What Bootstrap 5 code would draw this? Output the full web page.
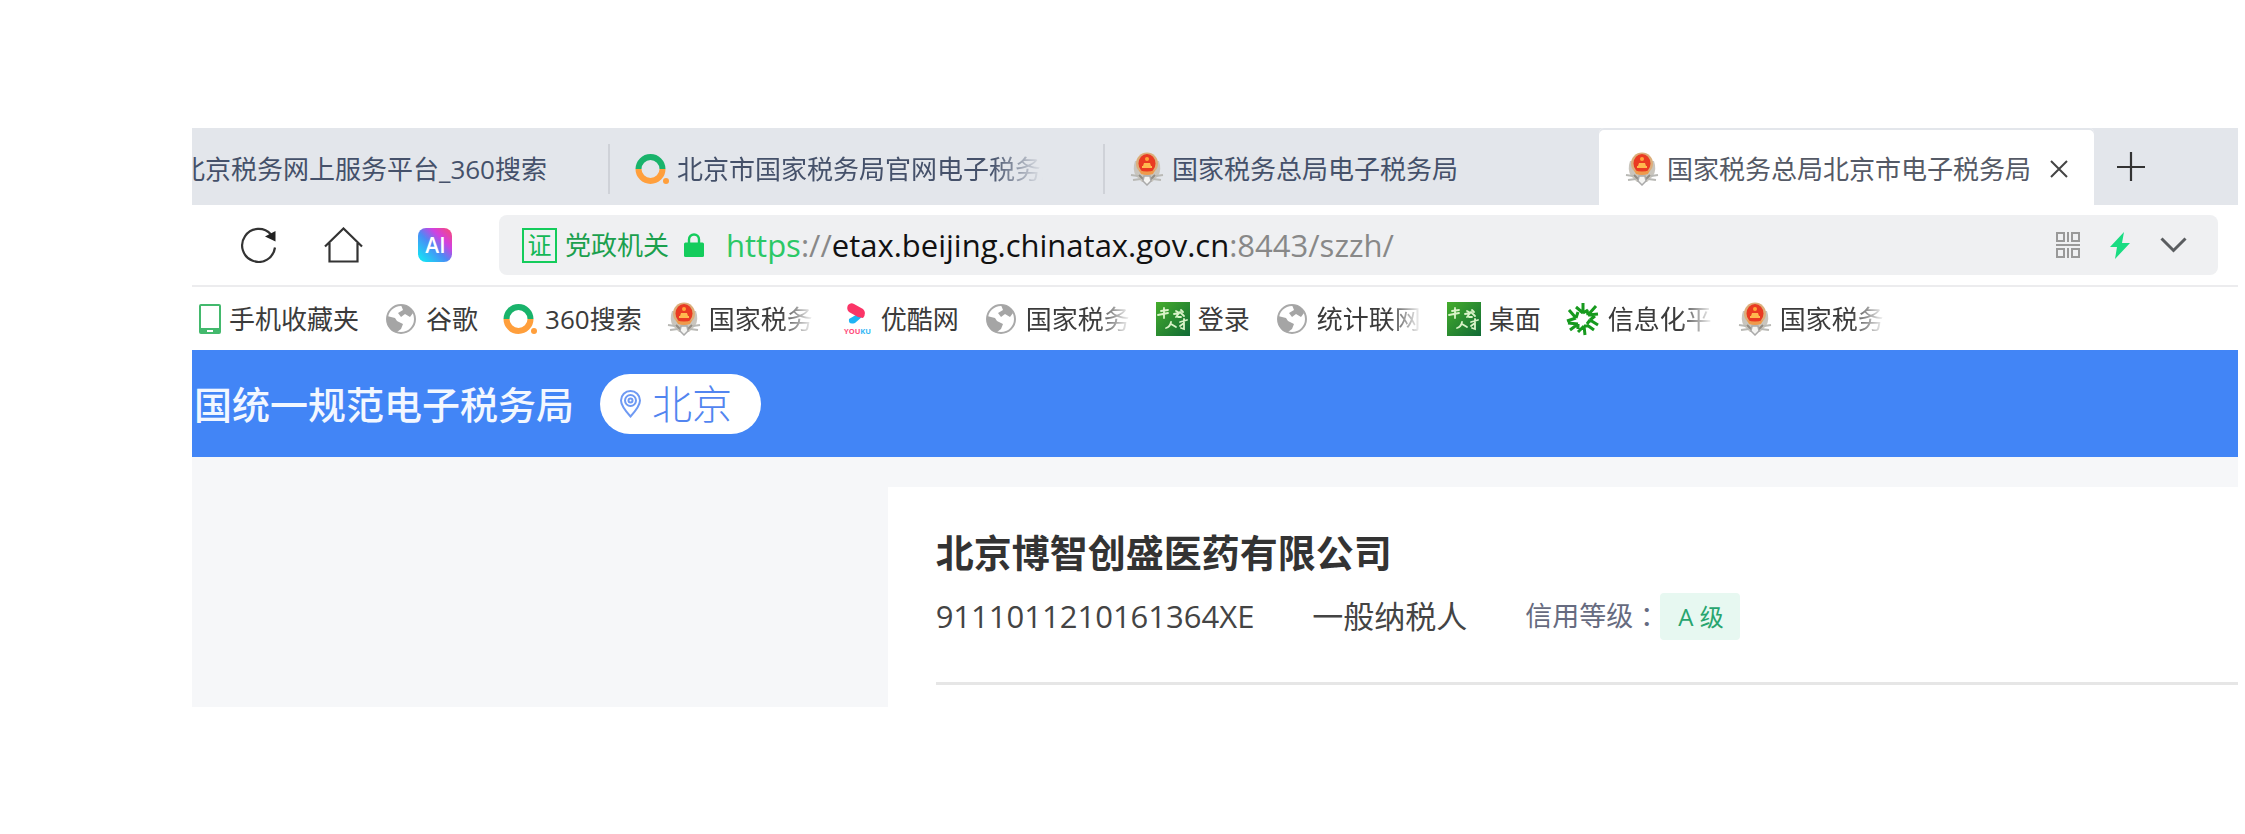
<!DOCTYPE html>
<html lang="zh-CN">
<head>
<meta charset="utf-8">
<meta name="viewport" content="width=device-width, initial-scale=1">
<title>国家税务总局北京市电子税务局</title>
<link href="https://cdn.jsdelivr.net/npm/bootstrap@5.3.0/dist/css/bootstrap.min.css" rel="stylesheet">
<style>
  body { font-family: "Open Sans", "Noto Sans CJK SC", sans-serif; color: #333; background: #fff; }
  .browser { margin: 128px 7px 0 192px; }
  .fs-ui { font-size: 26px; line-height: 36px; }
  a { text-decoration: none; color: inherit; }
  button { border: 0; padding: 0; background: none; color: inherit; }
  svg { display: block; flex: none; }
  .ico { width: 34px; height: 34px; }

  .tabstrip { height: 77px; background: #e3e6eb; color: #45516a; }
  .tab { flex: 0 1 495px; min-width: 0; padding: 4px 26px 0; gap: 8px; }
  .tab-first { flex-basis: 417px; padding-right: 62px; }
  .tab + .tab:not(.tab-on)::before { content: ""; width: 2px; height: 50px; margin-left: -27px; margin-right: 17px; background: #cfd2d8; }
  .tab-on { background: #fff; color: #555a66; border-radius: 5px 5px 0 0; box-shadow: inset 0 2px #e3e6eb; }
  .new-tab { margin-left: 22px; color: #333; }
  .fade-tab { width: 366px; -webkit-mask-image: linear-gradient(90deg, #000 86%, transparent); mask-image: linear-gradient(90deg, #000 86%, transparent); }

  .toolbar { height: 82px; padding-left: 48px; padding-right: 20px; border-bottom: 2px solid #ececee; }
  .tool-home { margin-left: 47px; }
  .tool-ai { margin-left: 55px; margin-right: 47px; }
  .omnibox { height: 60px; border-radius: 8px; background: #eff0f2; padding: 0 31px 0 23px; }
  .cert { width: 35px; height: 35px; border: 2px solid #14cc5c; line-height: 29px; font-size: 24px; color: #14b856; }
  .org { color: #1ba04e; margin: 0 15px 0 8px; }
  .url { font-size: 31px; line-height: 40px; margin-left: 22px; color: #888; outline: 0; }
  .url-scheme { color: #2bc866; }
  .url-host { color: #111; }

  .bookmarks { height: 63px; padding-left: 7px; gap: 25px; color: #3b3b3b; }
  .bookmarks a { gap: 8px; flex: none; }
  .fade-mark { width: 105px; -webkit-mask-image: linear-gradient(90deg, #000 68%, transparent); mask-image: linear-gradient(90deg, #000 68%, transparent); }

  .site-head { height: 107px; background: #4285f6; padding-left: 2px; gap: 26px; }
  .site-name { font-size: 38px; line-height: 56px; color: #f2f7ff; font-weight: 500; }
  .city { height: 60px; border-radius: 30px; background: #fff; color: #5285f0; font-size: 40px; line-height: 56px; font-weight: 300; padding: 0 29px 0 20px; gap: 11px; }

  .site-body { background: #f6f7f9; }
  .side { flex: 0 0 34%; }
  .company { background: #fff; margin-top: 30px; padding: 37px 0 22px 48px; }
  .company h1 { font-size: 38px; line-height: 56px; font-weight: 700; margin: 0 0 13px; }
  .facts { height: 47px; font-size: 31px; color: #444; gap: 58px; margin-bottom: 42px; }
  .credit { font-size: 27px; color: #666b80; }
  .colon { font-family: "Noto Sans CJK TC", sans-serif; }
  .grade { height: 47px; border-radius: 4px; background: #e7f8f1; color: #27a56f; font-size: 24px; padding: 0 16px 0 18px; }
  .rule { height: 3px; background: #e6e6e6; }
</style>
</head>
<body>
<svg width="0" height="0" class="position-absolute" aria-hidden="true">
  <defs>
    <linearGradient id="aiA" x1="0" y1="1" x2="1" y2="0"><stop offset=".1" stop-color="#19dcf5"/><stop offset=".45" stop-color="#4a8cf5"/><stop offset=".7" stop-color="#d23fe0"/><stop offset="1" stop-color="#fb4b6d"/></linearGradient>
    <linearGradient id="gr" x1="0" y1="0" x2="1" y2="1"><stop offset="0" stop-color="#45ad2c"/><stop offset="1" stop-color="#106a35"/></linearGradient>
    <symbol id="i-360" viewBox="0 0 34 34">
      <path d="M3.500 17A12 12 0 0 1 27.500 17" fill="none" stroke="#19b36b" stroke-width="6"/>
      <path d="M3.500 17A12 12 0 0 0 27.500 17" fill="none" stroke="#ff9f3c" stroke-width="6"/>
      <circle cx="31" cy="29" r="3" fill="#ff9f3c"/>
    </symbol>
    <symbol id="i-emblem" viewBox="0 0 34 34">
      <path d="M5 9q-3 9 1 15l6 6h10l6-6q4-6 1-15z" fill="#c9c5bd"/>
      <path d="M1 23l7 1M3 28l8-1M33 23l-7 1M31 28l-8-1" stroke="#b9b9b5" stroke-width="2"/>
      <path d="M9 23l5 5M25 23l-5 5" stroke="#918d86" stroke-width="2"/>
      <path d="M17 33l-4-4 1-5h6l1 5z" fill="#f4f4f2" stroke="#aaa" stroke-width="1.500"/>
      <ellipse cx="17" cy="11.500" rx="11" ry="11" fill="#dcae7a"/>
      <ellipse cx="17" cy="11.500" rx="8.500" ry="9.500" fill="#ea3a22"/>
      <path d="M12 14h10v2H12zM14 11h6l1 3h-8z" fill="#ffb84e"/><circle cx="17" cy="7" r="2" fill="#ffa53a"/>
      <path d="M9 18q8 3 16 0l-2 4q-6 2-12 0z" fill="#ee9a4c"/>
    </symbol>
    <symbol id="i-globe" viewBox="0 0 34 34">
      <circle cx="17" cy="17" r="14" fill="#fff" stroke="#a9a9a9" stroke-width="2"/>
      <path d="M17 3q9 0 12 8l-3 4-5-3-4 3-3-4 5-3z" fill="#a5a5a5"/>
      <path d="M3 14l8 2 2 3 6 3-2 5-4 3-5-1Q2 24 3 14z" fill="#a5a5a5"/>
    </symbol>
    <symbol id="i-green" viewBox="0 0 34 34">
      <path fill="url(#gr)" d="M0 0h34v34H0z"/>
      <g fill="none" stroke="#d9f3c8" stroke-width="1.800" stroke-linecap="round">
        <path d="M5 9l7-1M2 13l10-2M8 6v10M18 12l5-1M20 9l2 1M25 8l2 2M20 15l4-5 4 4M22 15h3"/>
        <path d="M15 20q-1 5-5 6M15 22l5 3M24 20l7-2M28 17v10l-3-1M28 21l-4 3"/>
      </g>
    </symbol>
  </defs>
</svg>

<main class="browser">
  <nav class="tabstrip d-flex fs-ui text-nowrap" aria-label="标签页">
    <a href="#" class="tab tab-first d-flex align-items-center justify-content-end overflow-hidden">北京税务网上服务平台_360搜索</a>
    <a href="#" class="tab d-flex align-items-center">
      <svg class="ico"><use href="#i-360"/></svg><span class="fade-tab overflow-hidden">北京市国家税务局官网电子税务局</span>
    </a>
    <a href="#" class="tab d-flex align-items-center">
      <svg class="ico"><use href="#i-emblem"/></svg><span>国家税务总局电子税务局</span>
    </a>
    <div class="tab tab-on d-flex align-items-center">
      <svg class="ico"><use href="#i-emblem"/></svg><a href="#">国家税务总局北京市电子税务局</a>
      <button type="button" class="ms-auto" aria-label="关闭标签页"><svg width="18" height="20" viewBox="0 0 18 20"><path d="M1 2l16 16M17 2L1 18" stroke="#444" stroke-width="2"/></svg></button>
    </div>
    <button type="button" class="new-tab" aria-label="新建标签页"><svg width="30" height="30" viewBox="0 0 30 30"><path d="M15 0v29M1 15h28" stroke="#333" stroke-width="2.200"/></svg></button>
  </nav>

  <div class="toolbar d-flex align-items-center fs-ui">
    <button type="button" aria-label="刷新"><svg width="37" height="36" viewBox="0 0 37 36"><path d="M35 20.500A16.500 16.500 0 1 1 31 7.500" fill="none" stroke="#333" stroke-width="2.200"/><path d="M35.500 4v10.500L25 9.500z" fill="#222"/></svg></button>
    <button type="button" class="tool-home" aria-label="主页"><svg width="39" height="36" viewBox="0 0 39 36"><path d="M1 19.500L19.500 1.500 38 19.500M5.500 16v18.500h28V16" fill="none" stroke="#333" stroke-width="2.200"/></svg></button>
    <button type="button" class="tool-ai" aria-label="AI 助手"><svg width="34" height="34" viewBox="0 0 34 34"><rect width="34" height="34" rx="8" fill="url(#aiA)"/><text x="17.500" y="25" text-anchor="middle" font-family="Open Sans" font-weight="600" font-size="21" fill="#fff">AI</text></svg></button>
    <div class="omnibox flex-grow-1 d-flex align-items-center text-nowrap">
      <span class="cert text-center">证</span><span class="org">党政机关</span>
      <svg width="20" height="24" viewBox="0 0 20 24"><path d="M5 11V6.500a5 5 0 0 1 10 0V11" fill="none" stroke="#14cc5c" stroke-width="2.400"/><rect y="9.500" width="20" height="14.500" rx="1.500" fill="#14cc5c"/></svg>
      <div class="url" role="textbox" aria-label="地址" contenteditable="true" spellcheck="false"><span class="url-scheme">https</span>://<span class="url-host">etax.beijing.chinatax.gov.cn</span>:8443/szzh/</div>
      <div class="ms-auto d-flex align-items-center">
        <button type="button" aria-label="二维码"><svg width="24" height="26" viewBox="0 0 24 26" fill="none" stroke="#999" stroke-width="2"><path d="M1 1h7v8H1zM16 1h7v8h-7zM1 17h7v8H1zM16 17h7v8h-7zM12 0v10M12 16v10M0 13h24"/></svg></button>
        <button type="button" class="px-4 mx-1" aria-label="极速模式"><svg width="24" height="27" viewBox="0 0 24 27"><path d="M16 0L2 15h7L7 27 22 11h-8z" fill="#19dc82"/></svg></button>
        <button type="button" aria-label="展开"><svg width="27" height="16" viewBox="0 0 27 16"><path d="M1.500 1.500l12 12 12-12" fill="none" stroke="#5a5d60" stroke-width="3"/></svg></button>
      </div>
    </div>
  </div>

  <nav class="bookmarks d-flex align-items-center fs-ui text-nowrap" aria-label="收藏夹">
    <a href="#" class="d-flex align-items-center"><svg width="22" height="30" viewBox="0 0 22 30"><path d="M1 2q0-1 1-1h18q1 0 1 1v26q0 1-1 1H2q-1 0-1-1z" fill="#fff" stroke="#43b96d" stroke-width="2"/><path d="M1 24h20v5H1z" fill="#43b96d"/><path d="M8 26h6v2H8z" fill="#fff"/></svg>手机收藏夹</a>
    <a href="#" class="d-flex align-items-center"><svg class="ico"><use href="#i-globe"/></svg>谷歌</a>
    <a href="#" class="d-flex align-items-center"><svg class="ico"><use href="#i-360"/></svg>360搜索</a>
    <a href="#" class="d-flex align-items-center"><svg class="ico"><use href="#i-emblem"/></svg><span class="fade-mark">国家税务</span></a>
    <a href="#" class="d-flex align-items-center"><svg class="ico" viewBox="0 0 34 34"><path d="M10 17l12-7q5 0 2 4l-8 7q-7 2-6-4z" fill="#1fb4f5"/><path d="M9 3q3-3 6-1l9 5q4 4 0 9l-5-1-9-5q-3-3-1-7z" fill="#fb3567"/><text x="5" y="32" font-family="Open Sans" font-weight="700" font-size="7.500" fill="#ff4d7c">YOU<tspan fill="#35b8f5">KU</tspan></text></svg>优酷网</a>
    <a href="#" class="d-flex align-items-center"><svg class="ico"><use href="#i-globe"/></svg><span class="fade-mark">国家税务</span></a>
    <a href="#" class="d-flex align-items-center"><svg class="ico"><use href="#i-green"/></svg>登录</a>
    <a href="#" class="d-flex align-items-center"><svg class="ico"><use href="#i-globe"/></svg><span class="fade-mark">统计联网</span></a>
    <a href="#" class="d-flex align-items-center"><svg class="ico"><use href="#i-green"/></svg>桌面</a>
    <a href="#" class="d-flex align-items-center"><svg class="ico" viewBox="0 0 34 34" fill="none" stroke="#179a1e" stroke-width="3"><path d="M17 1v10M17 11l-7-6M17 11l5-3M22 13l8-9M22 13l10-1M22 13l-1-5M24 18l8 5M24 18l5-4M24 18l-3 4M21 23l7 5M18 24l1 9M18 24l-6 6M18 24l5 0M12 22l-8 6M12 22l-10-1M12 22v5M10 16l-9 3M10 16L3 8M10 16l2-6"/></svg><span class="fade-mark">信息化平</span></a>
    <a href="#" class="d-flex align-items-center"><svg class="ico"><use href="#i-emblem"/></svg><span class="fade-mark">国家税务</span></a>
  </nav>

  <header class="site-head d-flex align-items-center text-nowrap">
    <span class="site-name">国统一规范电子税务局</span>
    <button type="button" class="city d-flex align-items-center"><svg width="21" height="28" viewBox="0 0 21 28" fill="none" stroke="#6f9af3" stroke-width="2"><path d="M10.500 26.500Q1 16 1 10.500a9.500 9.500 0 0 1 19 0Q20 16 10.500 26.500z"/><circle cx="10.500" cy="10.500" r="5.500"/><circle cx="10.500" cy="10.500" r="2"/></svg>北京</button>
  </header>

  <div class="site-body d-flex">
    <div class="side"></div>
    <section class="company flex-grow-1">
      <h1>北京博智创盛医药有限公司</h1>
      <div class="facts d-flex align-items-center text-nowrap">
        <span>9111011210161364XE</span><span>一般纳税人</span>
        <span class="credit d-flex align-items-center">信用等级<span class="colon" lang="zh-TW">：</span><span class="grade d-flex align-items-center">A 级</span></span>
      </div>
      <div class="rule"></div>
    </section>
  </div>
</main>
<script src="https://cdn.jsdelivr.net/npm/bootstrap@5.3.0/dist/js/bootstrap.bundle.min.js"></script>
</body>
</html>
